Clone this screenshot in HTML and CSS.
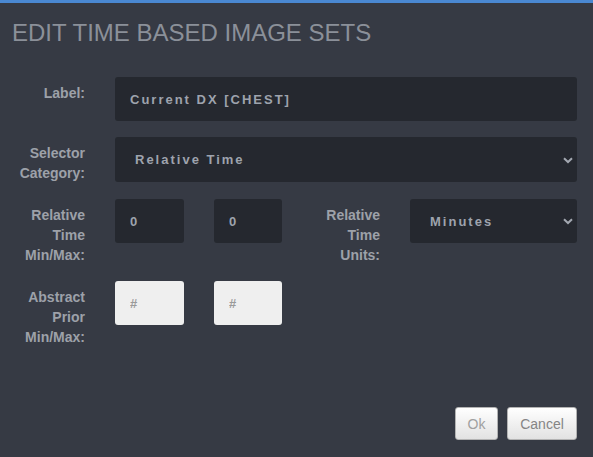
FILE: index.html
```html
<!DOCTYPE html>
<html>
<head>
<meta charset="utf-8">
<link rel="stylesheet" href="styles.css">
</head>
<body>
<div class="dialog">
  <h1 class="title">EDIT TIME BASED IMAGE SETS</h1>
  <div class="form">
    <div class="row">
      <label class="lbl">Label:</label>
      <input class="field wide" type="text" value="Current DX [CHEST]">
    </div>
    <div class="row row-sel">
      <label class="lbl">Selector Category:</label>
      <div class="sel-wrap wide">
        <select class="field select"><option>Relative Time</option></select>
        <svg class="chev" width="10" height="7" viewBox="0 0 10 7"><path d="M1 1.2 L5 5 L9 1.2" fill="none" stroke="#a3a8b1" stroke-width="2"/></svg>
      </div>
    </div>
    <div class="row">
      <label class="lbl">Relative Time Min/Max:</label>
      <input class="field num n1" type="text" value="0">
      <input class="field num n2" type="text" value="0">
      <label class="lbl lbl2">Relative Time Units:</label>
      <div class="sel-wrap grow">
        <select class="field select"><option>Minutes</option></select>
        <svg class="chev" width="10" height="7" viewBox="0 0 10 7"><path d="M1 1.2 L5 5 L9 1.2" fill="none" stroke="#a3a8b1" stroke-width="2"/></svg>
      </div>
    </div>
    <div class="row">
      <label class="lbl">Abstract Prior Min/Max:</label>
      <input class="field num light n1" type="text" placeholder="#">
      <input class="field num light n2" type="text" placeholder="#">
    </div>
  </div>
  <div class="footer">
    <button class="btn ok">Ok</button>
    <button class="btn cancel">Cancel</button>
  </div>
</div>
</body>
</html>
```

FILE: styles.css
```css
* { box-sizing: border-box; }
html, body { margin: 0; padding: 0; }
body {
  background: #363a44;
  border-top: 3px solid #4a88d2;
  height: 457px;
  overflow: hidden;
  font-family: "Liberation Sans", Arial, sans-serif;
}
.title {
  margin: 0;
  padding: 16px 12px 0;
  font-size: 24px;
  line-height: 28px;
  font-weight: normal;
  color: #8b9099;
}
.form {
  margin-top: 30px;
  padding-right: 16px;
}
.row {
  display: flex;
  align-items: flex-start;
  margin-bottom: 16px;
}
.lbl {
  flex: 0 0 85px;
  width: 85px;
  margin-right: 30px;
  text-align: right;
  font-size: 14px;
  font-weight: bold;
  line-height: 20px;
  padding-top: 6px;
  color: #9da1a9;
}
.lbl2 {
  flex: 0 0 70px;
  width: 70px;
  margin-left: 28px;
}
.field {
  height: 44px;
  border: none;
  border-radius: 3px;
  background: #25282f;
  color: #9ea3ad;
  font-family: "Liberation Sans", Arial, sans-serif;
  font-size: 13px;
  font-weight: bold;
  letter-spacing: 2px;
  padding: 0 15px;
  outline: none;
}
.wide { flex: 1 1 auto; }
.row-sel .sel-wrap .field { height: 45px; }
.num { width: 69px; flex: 0 0 69px; }
.n1 { margin-right: 30px; }
.n2 { width: 68px; flex: 0 0 68px; }
.light {
  background: #efefef;
}
.light::placeholder { color: #9a9a9a; letter-spacing: 0; }
.sel-wrap {
  position: relative;
  display: flex;
}
.grow { flex: 1 1 auto; }
.select {
  -webkit-appearance: none;
  appearance: none;
  width: 100%;
  padding-left: 20px;
}
.chev {
  position: absolute;
  right: 4px;
  top: 50%;
  margin-top: -3px;
  pointer-events: none;
}
.footer {
  display: flex;
  justify-content: flex-end;
  gap: 9px;
  padding-right: 16px;
  margin-top: 60px;
}
.btn {
  height: 33px;
  border: 1px solid #b3b3b3;
  border-radius: 3px;
  background: linear-gradient(#ffffff, #e2e2e2);
  font-family: "Liberation Sans", Arial, sans-serif;
  font-size: 14px;
  padding: 0;
}
.ok { width: 43px; color: #a0a0a0; }
.cancel { width: 70px; color: #858585; }
```
